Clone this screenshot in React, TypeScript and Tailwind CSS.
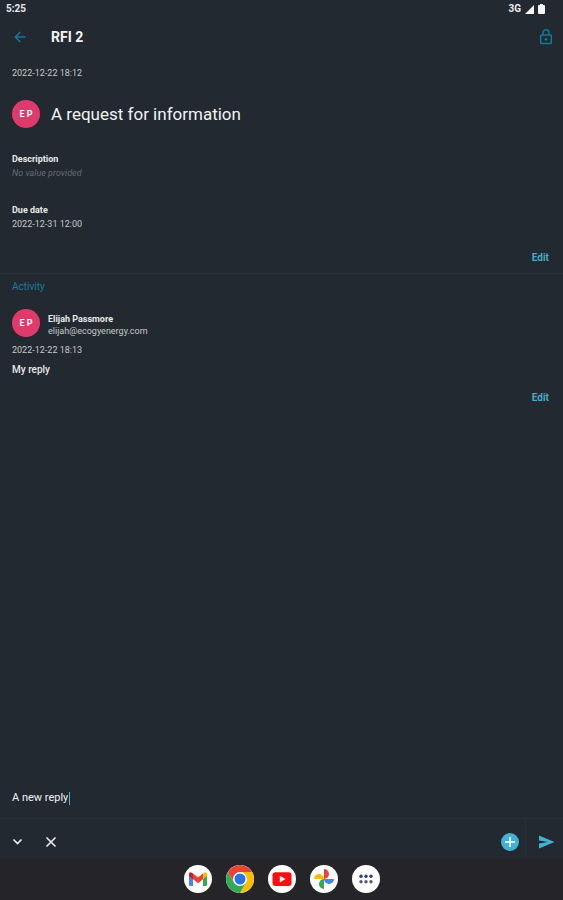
import React, { useState } from "react";

function Avatar() {
  return (
    <div className="flex size-7 shrink-0 items-center justify-center rounded-full bg-[#de3a6c] text-[9px] font-bold text-white">
      E P
    </div>
  );
}

function EditButton() {
  return (
    <button type="button" className="text-[10px] leading-3 font-bold text-[#4ba9c9]">
      Edit
    </button>
  );
}

function StatusBar() {
  return (
    <div className="flex h-[18px] items-center justify-between pr-[18px] pl-1.5 text-[10px] font-bold text-[#e8eaeb]">
      <span>5:25</span>
      <div className="flex items-center gap-1">
        <span>3G</span>
        <svg className="h-[9px] w-[9px]" viewBox="0 0 10 10" fill="#f5f5f5">
          <path d="M10 0v10H0z" />
        </svg>
        <svg className="h-[10px] w-[7px]" viewBox="0 0 7 10" fill="#f5f5f5">
          <path d="M2 0h3v1h1q1 0 1 1v7q0 1-1 1H1q-1 0-1-1V2q0-1 1-1h1z" />
        </svg>
      </div>
    </div>
  );
}

function Header() {
  return (
    <header className="flex h-[38px] items-center pr-2 pl-3">
      <button type="button" aria-label="Back">
        <svg className="size-4" viewBox="0 0 16 16" fill="none" stroke="#137a9b" strokeWidth="1.5">
          <path d="M13.5 8H3.5M8.3 3L3.3 8l5 5" />
        </svg>
      </button>
      <h1 className="ml-[23px] text-[14px] leading-5 font-bold text-[#f2f3f4]">RFI 2</h1>
      <button type="button" aria-label="Lock" className="ml-auto">
        <svg className="h-[18px] w-[18px]" viewBox="0 0 18 18" fill="none" stroke="#137a9b" strokeWidth="1.5">
          <rect x="3.7" y="7" width="10.6" height="8.6" rx="0.8" />
          <path d="M6 6.8V4.7a3 3 0 0 1 6 0v2.1" />
          <circle cx="9" cy="11.3" r="1.4" fill="#137a9b" stroke="none" />
        </svg>
      </button>
    </header>
  );
}

function GmailIcon() {
  return (
    <svg className="size-5" viewBox="0 0 20 20">
      <path fill="#4285f4" d="M1 5.5l4 3V17H2.2Q1 17 1 15.8z" />
      <path fill="#34a853" d="M15 8.5l4-3v10.3q0 1.2-1.2 1.2H15z" />
      <path fill="#fbbc04" d="M15 4.6l1.2-.9Q19 2.4 19 5.3v1.8l-4 3.2z" />
      <path fill="#c5221f" d="M5 4.6l-1.2-.9Q1 2.4 1 5.3v1.8l4 3.2z" />
      <path fill="#ea4335" d="M5 4.6l5 3.9 5-3.9v5.7l-5 3.9-5-3.9z" />
    </svg>
  );
}

function ChromeIcon() {
  return (
    <svg className="size-7" viewBox="0 0 28 28">
      <path fill="#ea4335" d="M14 14L1.88 7A14 14 0 0 1 26.12 7z" />
      <path fill="#ea4335" d="M1.88 7L7.94 17.5 14 14V7z" />
      <path fill="#fbbc04" d="M14 7h12.12A14 14 0 0 1 14 28l6.06-10.5z" />
      <path fill="#34a853" d="M1.88 7A14 14 0 0 0 14 28l6.06-10.5H7.94z" />
      <circle cx="14" cy="14" r="7" fill="#fff" />
      <circle cx="14" cy="14" r="5.5" fill="#2673e8" />
    </svg>
  );
}

function YoutubeIcon() {
  return (
    <svg className="size-5" viewBox="0 0 20 20">
      <rect x="0.5" y="3.3" width="19" height="13.6" rx="3" fill="#fa0f0f" />
      <path fill="#fff" d="M7.8 6.8v6.6l5.7-3.3z" />
    </svg>
  );
}

function PhotosIcon() {
  return (
    <svg className="size-5" viewBox="0 0 20 20">
      <path fill="#ea4335" d="M10 0a5 5 0 0 1 0 10z" />
      <path fill="#4285f4" d="M20 10a5 5 0 0 1-10 0z" />
      <path fill="#34a853" d="M10 20a5 5 0 0 1 0-10z" />
      <path fill="#fbbc04" d="M0 10a5 5 0 0 1 10 0z" />
    </svg>
  );
}

function AppsIcon() {
  return (
    <svg className="size-5" viewBox="0 0 20 20">
      <g fill="#2c3a8c">
        <circle cx="5" cy="7.3" r="1.7" />
        <circle cx="10" cy="7.3" r="1.7" />
        <circle cx="15" cy="7.3" r="1.7" />
      </g>
      <g fill="#565a70">
        <circle cx="5" cy="12.7" r="1.7" />
        <circle cx="10" cy="12.7" r="1.7" />
        <circle cx="15" cy="12.7" r="1.7" />
      </g>
    </svg>
  );
}

const dockApps = [
  { name: "Gmail", icon: <GmailIcon /> },
  { name: "Chrome", icon: <ChromeIcon /> },
  { name: "YouTube", icon: <YoutubeIcon /> },
  { name: "Photos", icon: <PhotosIcon /> },
  { name: "All apps", icon: <AppsIcon /> },
];

export default function App() {
  const [reply, setReply] = useState("A new reply");

  return (
    <div className="flex min-h-screen flex-col bg-[#222930] font-['Roboto','Liberation_Sans',sans-serif] text-[9px] leading-3 text-[#c5c9cc]">
      <StatusBar />
      <Header />

      <main className="flex flex-1 flex-col">
        <section className="border-b border-[#293138] px-3 pt-[11px] pb-[9px]">
          <p>2022-12-22 18:12</p>
          <div className="mt-[21px] flex items-center gap-[11px]">
            <Avatar />
            <h2 className="text-[17px] leading-6 text-[#f2f3f4]">A request for information</h2>
          </div>
          <h3 className="mt-[25px] font-bold text-[#e8eaeb]">Description</h3>
          <p className="mt-0.5 text-[#666c71] italic">No value provided</p>
          <h3 className="mt-[25px] font-bold text-[#e8eaeb]">Due date</h3>
          <p className="mt-0.5">2022-12-31 12:00</p>
          <div className="mt-[22px] flex justify-end pr-0.5">
            <EditButton />
          </div>
        </section>

        <section className="px-3 pt-[7px]">
          <h2 className="text-[10px] text-[#167d9e]">Activity</h2>
          <div className="mt-4 flex items-center gap-2">
            <Avatar />
            <div className="pt-1">
              <p className="font-bold text-[#e8eaeb]">Elijah Passmore</p>
              <p>elijah@ecogyenergy.com</p>
            </div>
          </div>
          <p className="mt-[7px]">2022-12-22 18:13</p>
          <p className="mt-2 text-[10px] font-medium text-[#e8eaeb]">My reply</p>
          <div className="mt-4 flex justify-end pr-0.5">
            <EditButton />
          </div>
        </section>

        <div className="mt-auto flex items-center px-3 pb-3">
          <input
            aria-label="Reply"
            className="field-sizing-content bg-transparent text-[11px] leading-4 text-[#f2f3f4] outline-none"
            value={reply}
            onChange={(e) => setReply(e.target.value)}
          />
          <span className="ml-px h-[13px] w-px bg-[#4db8dc]" />
        </div>
      </main>

      <div className="flex h-10 items-stretch border-t border-[#293138] pr-2 pl-3">
        <button type="button" aria-label="Collapse" className="pt-1.5">
          <svg className="size-[11px]" viewBox="0 0 11 11" fill="none" stroke="#eceeef" strokeWidth="1.7">
            <path d="M1.5 3.5l4 4 4-4" />
          </svg>
        </button>
        <button type="button" aria-label="Discard" className="ml-[22px] pt-1.5">
          <svg className="size-3" viewBox="0 0 12 12" fill="none" stroke="#eceeef" strokeWidth="1.6">
            <path d="M1.5 1.5l9 9M10.5 1.5l-9 9" />
          </svg>
        </button>
        <button type="button" aria-label="Add" className="ml-auto pt-1.5">
          <svg className="size-[18px]" viewBox="0 0 18 18">
            <circle cx="9" cy="9" r="9" fill="#45b0d5" />
            <path d="M9 4v10M4 9h10" stroke="#fff" strokeWidth="1.5" />
          </svg>
        </button>
        <div className="ml-1.5 w-px bg-[#293138]" />
        <button type="button" aria-label="Send" className="ml-3 pt-1.5">
          <svg className="h-[14px] w-[17px]" viewBox="0 0 17 14" fill="#45b0d5">
            <path d="M1 0.5L16.5 7 1 13.5V8.6L10 7 1 5.4z" />
          </svg>
        </button>
      </div>

      <nav className="flex h-[42px] items-center justify-center gap-3.5 bg-[#252429]">
        {dockApps.map((app) => (
          <button
            key={app.name}
            type="button"
            aria-label={app.name}
            className="flex size-7 items-center justify-center rounded-full bg-white"
          >
            {app.icon}
          </button>
        ))}
      </nav>
    </div>
  );
}
